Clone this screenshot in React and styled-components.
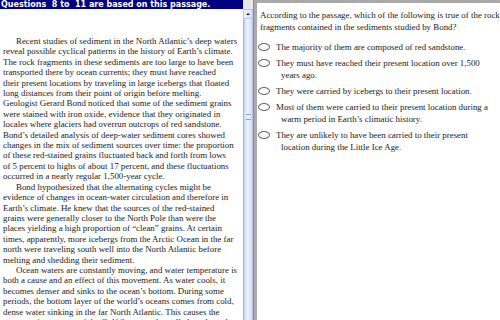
import React from "react";
import styled, { createGlobalStyle } from "styled-components";

const GlobalStyle = createGlobalStyle`
  html, body { margin: 0; padding: 0; background: #fff; }
  body { width: 500px; height: 320px; overflow: hidden; }
`;

const Screen = styled.div`
  display: flex;
  width: 500px;
  height: 320px;
  overflow: hidden;
  background: #fff;
`;

const PassagePane = styled.div`
  width: 243px;
  display: flex;
  flex-direction: column;
  overflow: hidden;
`;

const Banner = styled.div`
  flex: none;
  height: 9px;
  background: #000080;
  color: #fff;
  font-family: Tahoma, "DejaVu Sans", sans-serif;
  font-weight: bold;
  font-size: 8px;
  line-height: 9px;
  padding-left: 1px;
  white-space: pre;
  overflow: hidden;
`;

const Passage = styled.div`
  flex: 1;
  min-height: 0;
  overflow: hidden;
  padding: 27px 0 0 3px;
  font-family: "Liberation Serif", serif;
  font-size: 8.9px;
  line-height: 10.4px;
  color: #222;
  white-space: nowrap;
`;

const Para = styled.p`
  margin: 0;
  text-indent: 13px;
`;

const ScrollColumn = styled.div`
  flex: none;
  width: 10px;
  display: flex;
  flex-direction: column;
  background: #f0f0f0;
`;

const ScrollCorner = styled.div`
  flex: none;
  height: 9px;
  background: #e8e8e8;
`;

const ArrowButton = styled.div`
  flex: none;
  height: 10px;
  display: flex;
  align-items: center;
  justify-content: center;
  background: linear-gradient(90deg, #eef3fb, #d6e2f3);
  border: 1px solid #b9c9e2;
  box-sizing: border-box;

  &::after {
    content: "";
    border-left: 2px solid transparent;
    border-right: 2px solid transparent;
    border-bottom: 2px solid #222;
  }
`;

const Thumb = styled.div`
  flex: 1;
  display: flex;
  flex-direction: column;
  align-items: center;
  background: linear-gradient(90deg, #c9d9f1, #eef3fb 45%, #cfdcf2);
  border-left: 1px solid #9fb6da;
  border-right: 1px solid #b6c6de;
`;

const Grip = styled.div`
  margin-top: 95px;
  width: 5px;
  height: 4px;
  border-top: 1px solid #8aa3cc;
  border-bottom: 1px solid #8aa3cc;
  background: #e4ecf8;
`;

const Splitter = styled.div`
  flex: none;
  width: 3px;
  background: #a9a9a9;
  border-left: 1px solid #8c8c8c;
`;

const QuestionPane = styled.div`
  flex: 1;
  min-width: 0;
  overflow: hidden;
  border-top: 3px solid #a9a9a9;
  padding: 6px 0 0 1px;
  font-family: "Liberation Serif", serif;
  font-size: 8.9px;
  line-height: 12px;
  color: #222;
  white-space: nowrap;
`;

const Stem = styled.div`
  margin: 0 0 8px 2px;
`;

const Options = styled.div`
  display: flex;
  flex-direction: column;
  gap: 4px;
`;

const Option = styled.div`
  display: flex;
  align-items: flex-start;
`;

const Radio = styled.span`
  flex: none;
  width: 10px;
  height: 6px;
  margin: 2px 6px 0 0;
  border: 1px solid #666;
  border-radius: 50%;
`;

const OptionText = styled.div`
  & > span {
    display: block;
  }
  & > span + span {
    padding-left: 5px;
  }
`;

const passage = [
  [
    "Recent studies of sediment in the North Atlantic\u2019s deep waters",
    "reveal possible cyclical patterns in the history of Earth\u2019s climate.",
    "The rock fragments in these sediments are too large to have been",
    "transported there by ocean currents; they must have reached",
    "their present locations by traveling in large icebergs that floated",
    "long distances from their point of origin before melting.",
    "Geologist Gerard Bond noticed that some of the sediment grains",
    "were stained with iron oxide, evidence that they originated in",
    "locales where glaciers had overrun outcrops of red sandstone.",
    "Bond\u2019s detailed analysis of deep-water sediment cores showed",
    "changes in the mix of sediment sources over time: the proportion",
    "of these red-stained grains fluctuated back and forth from lows",
    "of 5 percent to highs of about 17 percent, and these fluctuations",
    "occurred in a nearly regular 1,500-year cycle.",
  ],
  [
    "Bond hypothesized that the alternating cycles might be",
    "evidence of changes in ocean-water circulation and therefore in",
    "Earth\u2019s climate. He knew that the sources of the red-stained",
    "grains were generally closer to the North Pole than were the",
    "places yielding a high proportion of \u201cclean\u201d grains. At certain",
    "times, apparently, more icebergs from the Arctic Ocean in the far",
    "north were traveling south well into the North Atlantic before",
    "melting and shedding their sediment.",
  ],
  [
    "Ocean waters are constantly moving, and water temperature is",
    "both a cause and an effect of this movement. As water cools, it",
    "becomes denser and sinks to the ocean\u2019s bottom. During some",
    "periods, the bottom layer of the world\u2019s oceans comes from cold,",
    "dense water sinking in the far North Atlantic. This causes the",
    "warm surface waters of the Gulf Stream to be pulled northward.",
  ],
];

const options = [
  ["The majority of them are composed of red sandstone."],
  ["They must have reached their present location over 1,500", "years ago."],
  ["They were carried by icebergs to their present location."],
  [
    "Most of them were carried to their present location during a",
    "warm period in Earth\u2019s climatic history.",
  ],
  [
    "They are unlikely to have been carried to their present",
    "location during the Little Ice Age.",
  ],
];

const App = () => (
  <>
    <GlobalStyle />
    <Screen>
      <PassagePane>
        <Banner>{"Questions  8 to  11 are based on this passage."}</Banner>
        <Passage>
          {passage.map((lines, i) => (
            <Para key={i}>
              {lines.map((line, j) => (
                <React.Fragment key={j}>
                  {line}
                  {j < lines.length - 1 && <br />}
                </React.Fragment>
              ))}
            </Para>
          ))}
        </Passage>
      </PassagePane>
      <ScrollColumn>
        <ScrollCorner />
        <ArrowButton />
        <Thumb>
          <Grip />
        </Thumb>
      </ScrollColumn>
      <Splitter />
      <QuestionPane>
        <Stem>
          According to the passage, which of the following is true of the rock
          <br />
          fragments contained in the sediments studied by Bond?
        </Stem>
        <Options>
          {options.map((lines, i) => (
            <Option key={i}>
              <Radio />
              <OptionText>
                {lines.map((line, j) => (
                  <span key={j}>{line}</span>
                ))}
              </OptionText>
            </Option>
          ))}
        </Options>
      </QuestionPane>
    </Screen>
  </>
);

export default App;
